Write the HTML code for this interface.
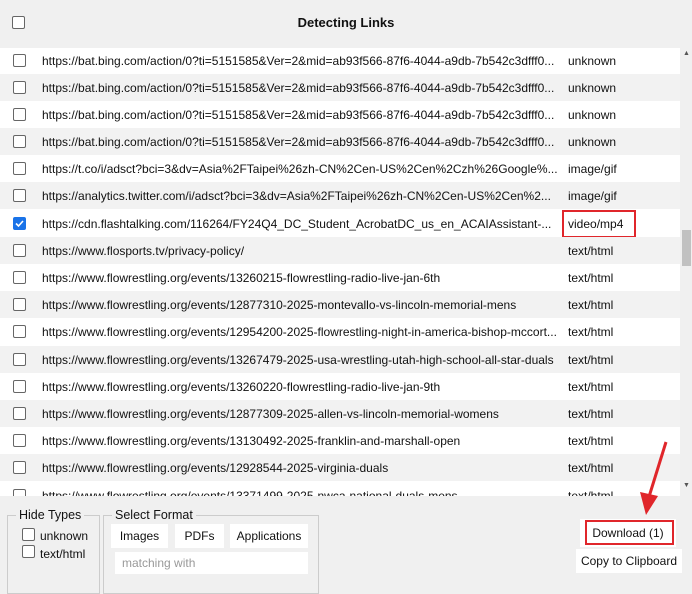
<!DOCTYPE html>
<html><head><style>
body{margin:0;width:692px;height:590px;overflow:hidden;background:#f0f0f0;font-family:"Liberation Sans",Arial,sans-serif;font-size:12px;color:#111;position:relative}
.hdr{position:absolute;left:0;top:0;width:692px;height:48px;background:#f0f0f0}
.hdr .t{position:absolute;left:0;width:692px;top:15px;text-align:center;font-weight:bold;font-size:13px}
.cb{position:absolute;width:11px;height:11px;border:1px solid #666;border-radius:2px;background:#fff}
.list{position:absolute;left:0;top:48px;width:680px;height:448px;overflow:hidden;background:#fff}
.row{position:absolute;left:0;width:680px;height:27px}
.row.g{background:#f2f2f2}
.row .u{position:absolute;left:42px;top:7px;white-space:nowrap;max-width:524px;overflow:hidden}
.row .ty{position:absolute;left:568px;top:7px}
.row .cb{left:13px;top:7px}
.sb{position:absolute;left:680px;top:48px;width:12px;height:448px;background:#f0f0f0}
.thumb{position:absolute;left:682px;top:230px;width:9px;height:36px;background:#c1c1c1}
fieldset{position:absolute;border:1px solid #ccc;margin:0;padding:0}
legend{font-size:12.5px;padding:0 3px}
.btn{position:absolute;background:#fff;font-size:12px;text-align:center}
</style></head><body>
<div class="hdr"><div class="cb" style="left:12px;top:16px"></div><div class="t">Detecting Links</div></div>
<div class="list">
<div class="row" style="top:-1px"><div class="cb"></div><div class="u">https://bat.bing.com/action/0?ti=5151585&amp;Ver=2&amp;mid=ab93f566-87f6-4044-a9db-7b542c3dfff0...</div><div class="ty">unknown</div></div>
<div class="row g" style="top:26px"><div class="cb"></div><div class="u">https://bat.bing.com/action/0?ti=5151585&amp;Ver=2&amp;mid=ab93f566-87f6-4044-a9db-7b542c3dfff0...</div><div class="ty">unknown</div></div>
<div class="row" style="top:53px"><div class="cb"></div><div class="u">https://bat.bing.com/action/0?ti=5151585&amp;Ver=2&amp;mid=ab93f566-87f6-4044-a9db-7b542c3dfff0...</div><div class="ty">unknown</div></div>
<div class="row g" style="top:80px"><div class="cb"></div><div class="u">https://bat.bing.com/action/0?ti=5151585&amp;Ver=2&amp;mid=ab93f566-87f6-4044-a9db-7b542c3dfff0...</div><div class="ty">unknown</div></div>
<div class="row" style="top:107px"><div class="cb"></div><div class="u">https://t.co/i/adsct?bci=3&amp;dv=Asia%2FTaipei%26zh-CN%2Cen-US%2Cen%2Czh%26Google%...</div><div class="ty">image/gif</div></div>
<div class="row g" style="top:134px"><div class="cb"></div><div class="u">https://analytics.twitter.com/i/adsct?bci=3&amp;dv=Asia%2FTaipei%26zh-CN%2Cen-US%2Cen%2...</div><div class="ty">image/gif</div></div>
<div class="row" style="top:162px"><div class="cb" style="background:#1a73e8;border-color:#1a73e8"><svg width="11" height="11" style="position:absolute;left:0;top:0"><path d="M2 5.5l2.5 2.5 4.5-5" stroke="#fff" stroke-width="1.6" fill="none"/></svg></div><div class="u">https://cdn.flashtalking.com/116264/FY24Q4_DC_Student_AcrobatDC_us_en_ACAIAssistant-...</div><div class="ty">video/mp4</div><div style="position:absolute;left:562px;top:0;width:70px;height:24px;border:2px solid #e0262b"></div></div>
<div class="row g" style="top:189px"><div class="cb"></div><div class="u">https://www.flosports.tv/privacy-policy/</div><div class="ty">text/html</div></div>
<div class="row" style="top:216px"><div class="cb"></div><div class="u">https://www.flowrestling.org/events/13260215-flowrestling-radio-live-jan-6th</div><div class="ty">text/html</div></div>
<div class="row g" style="top:243px"><div class="cb"></div><div class="u">https://www.flowrestling.org/events/12877310-2025-montevallo-vs-lincoln-memorial-mens</div><div class="ty">text/html</div></div>
<div class="row" style="top:270px"><div class="cb"></div><div class="u">https://www.flowrestling.org/events/12954200-2025-flowrestling-night-in-america-bishop-mccort...</div><div class="ty">text/html</div></div>
<div class="row g" style="top:298px"><div class="cb"></div><div class="u">https://www.flowrestling.org/events/13267479-2025-usa-wrestling-utah-high-school-all-star-duals</div><div class="ty">text/html</div></div>
<div class="row" style="top:325px"><div class="cb"></div><div class="u">https://www.flowrestling.org/events/13260220-flowrestling-radio-live-jan-9th</div><div class="ty">text/html</div></div>
<div class="row g" style="top:352px"><div class="cb"></div><div class="u">https://www.flowrestling.org/events/12877309-2025-allen-vs-lincoln-memorial-womens</div><div class="ty">text/html</div></div>
<div class="row" style="top:379px"><div class="cb"></div><div class="u">https://www.flowrestling.org/events/13130492-2025-franklin-and-marshall-open</div><div class="ty">text/html</div></div>
<div class="row g" style="top:406px"><div class="cb"></div><div class="u">https://www.flowrestling.org/events/12928544-2025-virginia-duals</div><div class="ty">text/html</div></div>
<div class="row" style="top:434px"><div class="cb"></div><div class="u">https://www.flowrestling.org/events/13371499-2025-nwca-national-duals-mens</div><div class="ty">text/html</div></div>
</div>
<div class="sb"></div><div class="thumb"></div>
<div style="position:absolute;left:683px;top:50px;font-size:7px;color:#555">▲</div>
<div style="position:absolute;left:683px;top:482px;font-size:7px;color:#555">▼</div>
<fieldset style="left:7px;top:508px;width:91px;height:84px"><legend style="margin-left:8px">Hide Types</legend></fieldset>
<div class="cb" style="left:22px;top:528px"></div><div style="position:absolute;left:40px;top:529px">unknown</div>
<div class="cb" style="left:22px;top:545px"></div><div style="position:absolute;left:40px;top:547px">text/html</div>
<fieldset style="left:103px;top:508px;width:214px;height:84px"><legend style="margin-left:8px">Select Format</legend></fieldset>
<div class="btn" style="left:111px;top:524px;width:57px;height:24px;line-height:24px">Images</div>
<div class="btn" style="left:175px;top:524px;width:49px;height:24px;line-height:24px">PDFs</div>
<div class="btn" style="left:230px;top:524px;width:78px;height:24px;line-height:24px">Applications</div>
<div class="btn" style="left:115px;top:552px;width:193px;height:22px;line-height:22px;text-align:left;padding-left:7px;box-sizing:border-box;color:#999">matching with</div>
<div class="btn" style="left:580px;top:519px;width:96px;height:28px;line-height:28px">Download (1)</div>
<div style="position:absolute;left:585px;top:520px;width:89px;height:25px;border:2px solid #e0262b;box-sizing:border-box"></div>
<div class="btn" style="left:576px;top:549px;width:106px;height:24px;line-height:24px">Copy to Clipboard</div>
<svg style="position:absolute;left:630px;top:440px" width="50" height="80"><path d="M36 2 L18 60" stroke="#e0262b" stroke-width="3" fill="none"/><path d="M10 52 L16 75 L28 56 Z" fill="#e0262b"/></svg>
</body></html>
